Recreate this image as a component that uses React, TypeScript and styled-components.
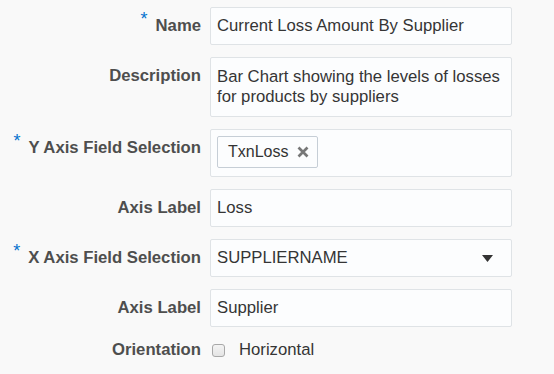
import React from "react";
import styled, { createGlobalStyle } from "styled-components";

const Global = createGlobalStyle`
  html, body { margin: 0; padding: 0; background: #f9f9f9; }
  body { font-family: "Liberation Sans", Arial, sans-serif; }
`;

const Form = styled.div`
  display: grid;
  grid-template-columns: 201px 302px;
  column-gap: 9px;
  row-gap: 12px;
  align-items: start;
  align-content: start;
  padding-top: 7px;
  width: 554px;
  height: 374px;
  box-sizing: border-box;
  background: #f9f9f9;
`;

const Label = styled.div<{ $pt?: number }>`
  text-align: right;
  font-weight: bold;
  font-size: 16.7px;
  line-height: 20px;
  height: ${(p) => (p.$pt ?? 9) + 20}px;
  color: #4e4e4e;
  padding-top: ${(p) => (p.$pt ?? 9)}px;
  box-sizing: border-box;
  white-space: nowrap;
`;

const Req = styled.span`
  color: #0572ce;
  font-size: 18px;
  line-height: 0;
  font-weight: normal;
  position: relative;
  top: -6px;
  margin-right: 8px;
`;

const Field = styled.div<{ $h?: number }>`
  box-sizing: border-box;
  height: ${(p) => p.$h ?? 38}px;
  border: 1px solid #dfe3e6;
  border-radius: 2px;
  background: #fcfdfe;
  padding: ${(p) => ((p.$h ?? 38) === 60 ? 9 : 8)}px 6px 0;
  font-size: 16.7px;
  line-height: 20px;
  color: #353535;
  overflow: hidden;
`;

const SelectField = styled(Field)`
  display: flex;
  align-items: flex-start;
  justify-content: space-between;
`;

const ChipField = styled(Field)`
  padding: 6px 6px 0;
`;

const Chip = styled.div`
  box-sizing: border-box;
  height: 32px;
  display: inline-flex;
  align-items: center;
  gap: 9px;
  padding: 0 8px 0 10px;
  border: 1px solid #c6ced6;
  border-radius: 2px;
  background: #fcfdfe;
  font-size: 16px;
  color: #333;
`;

const Arrow = styled.svg`
  margin-top: 7px;
  margin-right: 12px;
`;

const CheckRow = styled.label`
  display: flex;
  align-items: center;
  gap: 14px;
  height: 21px;
  padding-top: 1px;
  box-sizing: border-box;
  font-size: 16.7px;
  line-height: 20px;
  color: #353535;
  padding-left: 2px;
`;

const Box = styled.input`
  appearance: none;
  margin: 0;
  width: 13px;
  height: 13px;
  box-sizing: border-box;
  border: 1px solid #a8a8a8;
  border-radius: 3px;
  background: linear-gradient(#f4f4f4, #e4e4e4);
`;

export default function App() {
  return (
    <>
      <Global />
      <Form>
        <Label>
          <Req>*</Req>Name
        </Label>
        <Field>Current Loss Amount By Supplier</Field>

        <Label>Description</Label>
        <Field $h={60}>
          Bar Chart showing the levels of losses
          <br />
          for products by suppliers
        </Field>

        <Label>
          <Req>*</Req>Y Axis Field Selection
        </Label>
        <ChipField $h={48}>
          <Chip>
            TxnLoss
            <svg width="12" height="12" viewBox="0 0 12 12">
              <path d="M1.5 1.5 L10.5 10.5 M10.5 1.5 L1.5 10.5" stroke="#777" strokeWidth="2.7" />
            </svg>
          </Chip>
        </ChipField>

        <Label>Axis Label</Label>
        <Field>Loss</Field>

        <Label>
          <Req>*</Req>X Axis Field Selection
        </Label>
        <SelectField>
          SUPPLIERNAME
          <Arrow width="11" height="7" viewBox="0 0 11 7">
            <path d="M0 0 L11 0 L5.5 7 Z" fill="#333" />
          </Arrow>
        </SelectField>

        <Label>Axis Label</Label>
        <Field>Supplier</Field>

        <Label $pt={1}>Orientation</Label>
        <CheckRow>
          <Box type="checkbox" />
          Horizontal
        </CheckRow>
      </Form>
    </>
  );
}
